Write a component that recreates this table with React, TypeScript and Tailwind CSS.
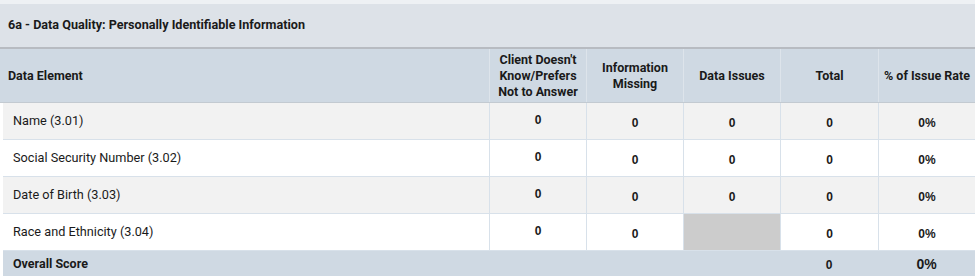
import React from "react";

const rows = [
  { name: "Name (3.01)", a: "0", b: "0", c: "0", t: "0", p: "0%", gray: true },
  { name: "Social Security Number (3.02)", a: "0", b: "0", c: "0", t: "0", p: "0%", gray: false },
  { name: "Date of Birth (3.03)", a: "0", b: "0", c: "0", t: "0", p: "0%", gray: true },
  { name: "Race and Ethnicity (3.04)", a: "0", b: "0", c: null, t: "0", p: "0%", gray: false },
];

const roboto = { fontFamily: "Roboto, 'Liberation Sans', sans-serif" };
const arial = { fontFamily: "'Liberation Sans', Arial, sans-serif" };

export default function App() {
  return (
    <div className="w-[975px] h-[278px] bg-white text-[#1a1a1a]" style={roboto}>
      <div className="h-[4px] bg-[#eef1f4]" />
      <div className="h-[43px] bg-[#dde2e8] flex items-center pl-[8px] text-[12.6px] font-bold">
        6a - Data Quality: Personally Identifiable Information
      </div>
      <div className="h-[2px] bg-[#b7bbc1]" />
      <div className="grid grid-cols-[489px_97px_97px_97px_98px_97px] h-[54px] bg-[#cfd9e3] border-b border-[#c3cad1] text-[12.5px] font-bold leading-[16px]">
        <div className="flex items-center pl-[8px]">Data Element</div>
        <div className="flex items-center justify-center text-center border-l border-[#dde4eb]">
          Client Doesn't
          <br />
          Know/Prefers
          <br />
          Not to Answer
        </div>
        <div className="flex items-center justify-center text-center border-l border-[#dde4eb]">
          Information
          <br />
          Missing
        </div>
        <div className="flex items-center justify-center text-center border-l border-[#dde4eb]">Data Issues</div>
        <div className="flex items-center justify-center text-center border-l border-[#dde4eb]">Total</div>
        <div className="flex items-center justify-center text-center border-l border-[#dde4eb]">% of Issue Rate</div>
      </div>
      {rows.map((r) => (
        <div key={r.name} className="pl-[3px]">
          <div
            className={`grid grid-cols-[486px_97px_97px_97px_98px_97px] h-[37px] border-b border-[#d8e1ea] ${
              r.gray ? "bg-[#f2f2f2]" : "bg-white"
            }`}
          >
            <div className="flex items-center pl-[10px] text-[12.7px]">{r.name}</div>
            <div className="flex items-center justify-center border-l border-[#d8e1ea] text-[12px] font-bold pb-[3px]" style={arial}>
              {r.a}
            </div>
            <div className="flex items-center justify-center border-l border-[#d8e1ea] text-[12px] font-bold pt-[3px]" style={arial}>
              {r.b}
            </div>
            {r.c === null ? (
              <div className="border-l border-[#d8e1ea] bg-[#cccccc]" />
            ) : (
              <div className="flex items-center justify-center border-l border-[#d8e1ea] text-[12px] font-bold pt-[3px]" style={arial}>
                {r.c}
              </div>
            )}
            <div className="flex items-center justify-center border-l border-[#d8e1ea] text-[12px] font-bold pt-[3px]" style={arial}>
              {r.t}
            </div>
            <div className="flex items-center justify-center border-l border-[#d8e1ea] text-[12px] font-bold pt-[3px]" style={arial}>
              {r.p}
            </div>
          </div>
        </div>
      ))}
      <div className="pl-[3px]">
        <div className="grid grid-cols-[486px_97px_97px_97px_98px_97px] h-[25px] bg-[#cfd9e3]">
          <div className="flex items-center pl-[10px] text-[12.5px] font-bold pt-[2px]">Overall Score</div>
          <div />
          <div />
          <div />
          <div className="flex items-center justify-center text-[12px] font-bold pt-[3px]" style={arial}>0</div>
          <div className="flex items-center justify-center text-[14px] font-bold pt-[1px]" style={arial}>0%</div>
        </div>
      </div>
    </div>
  );
}
